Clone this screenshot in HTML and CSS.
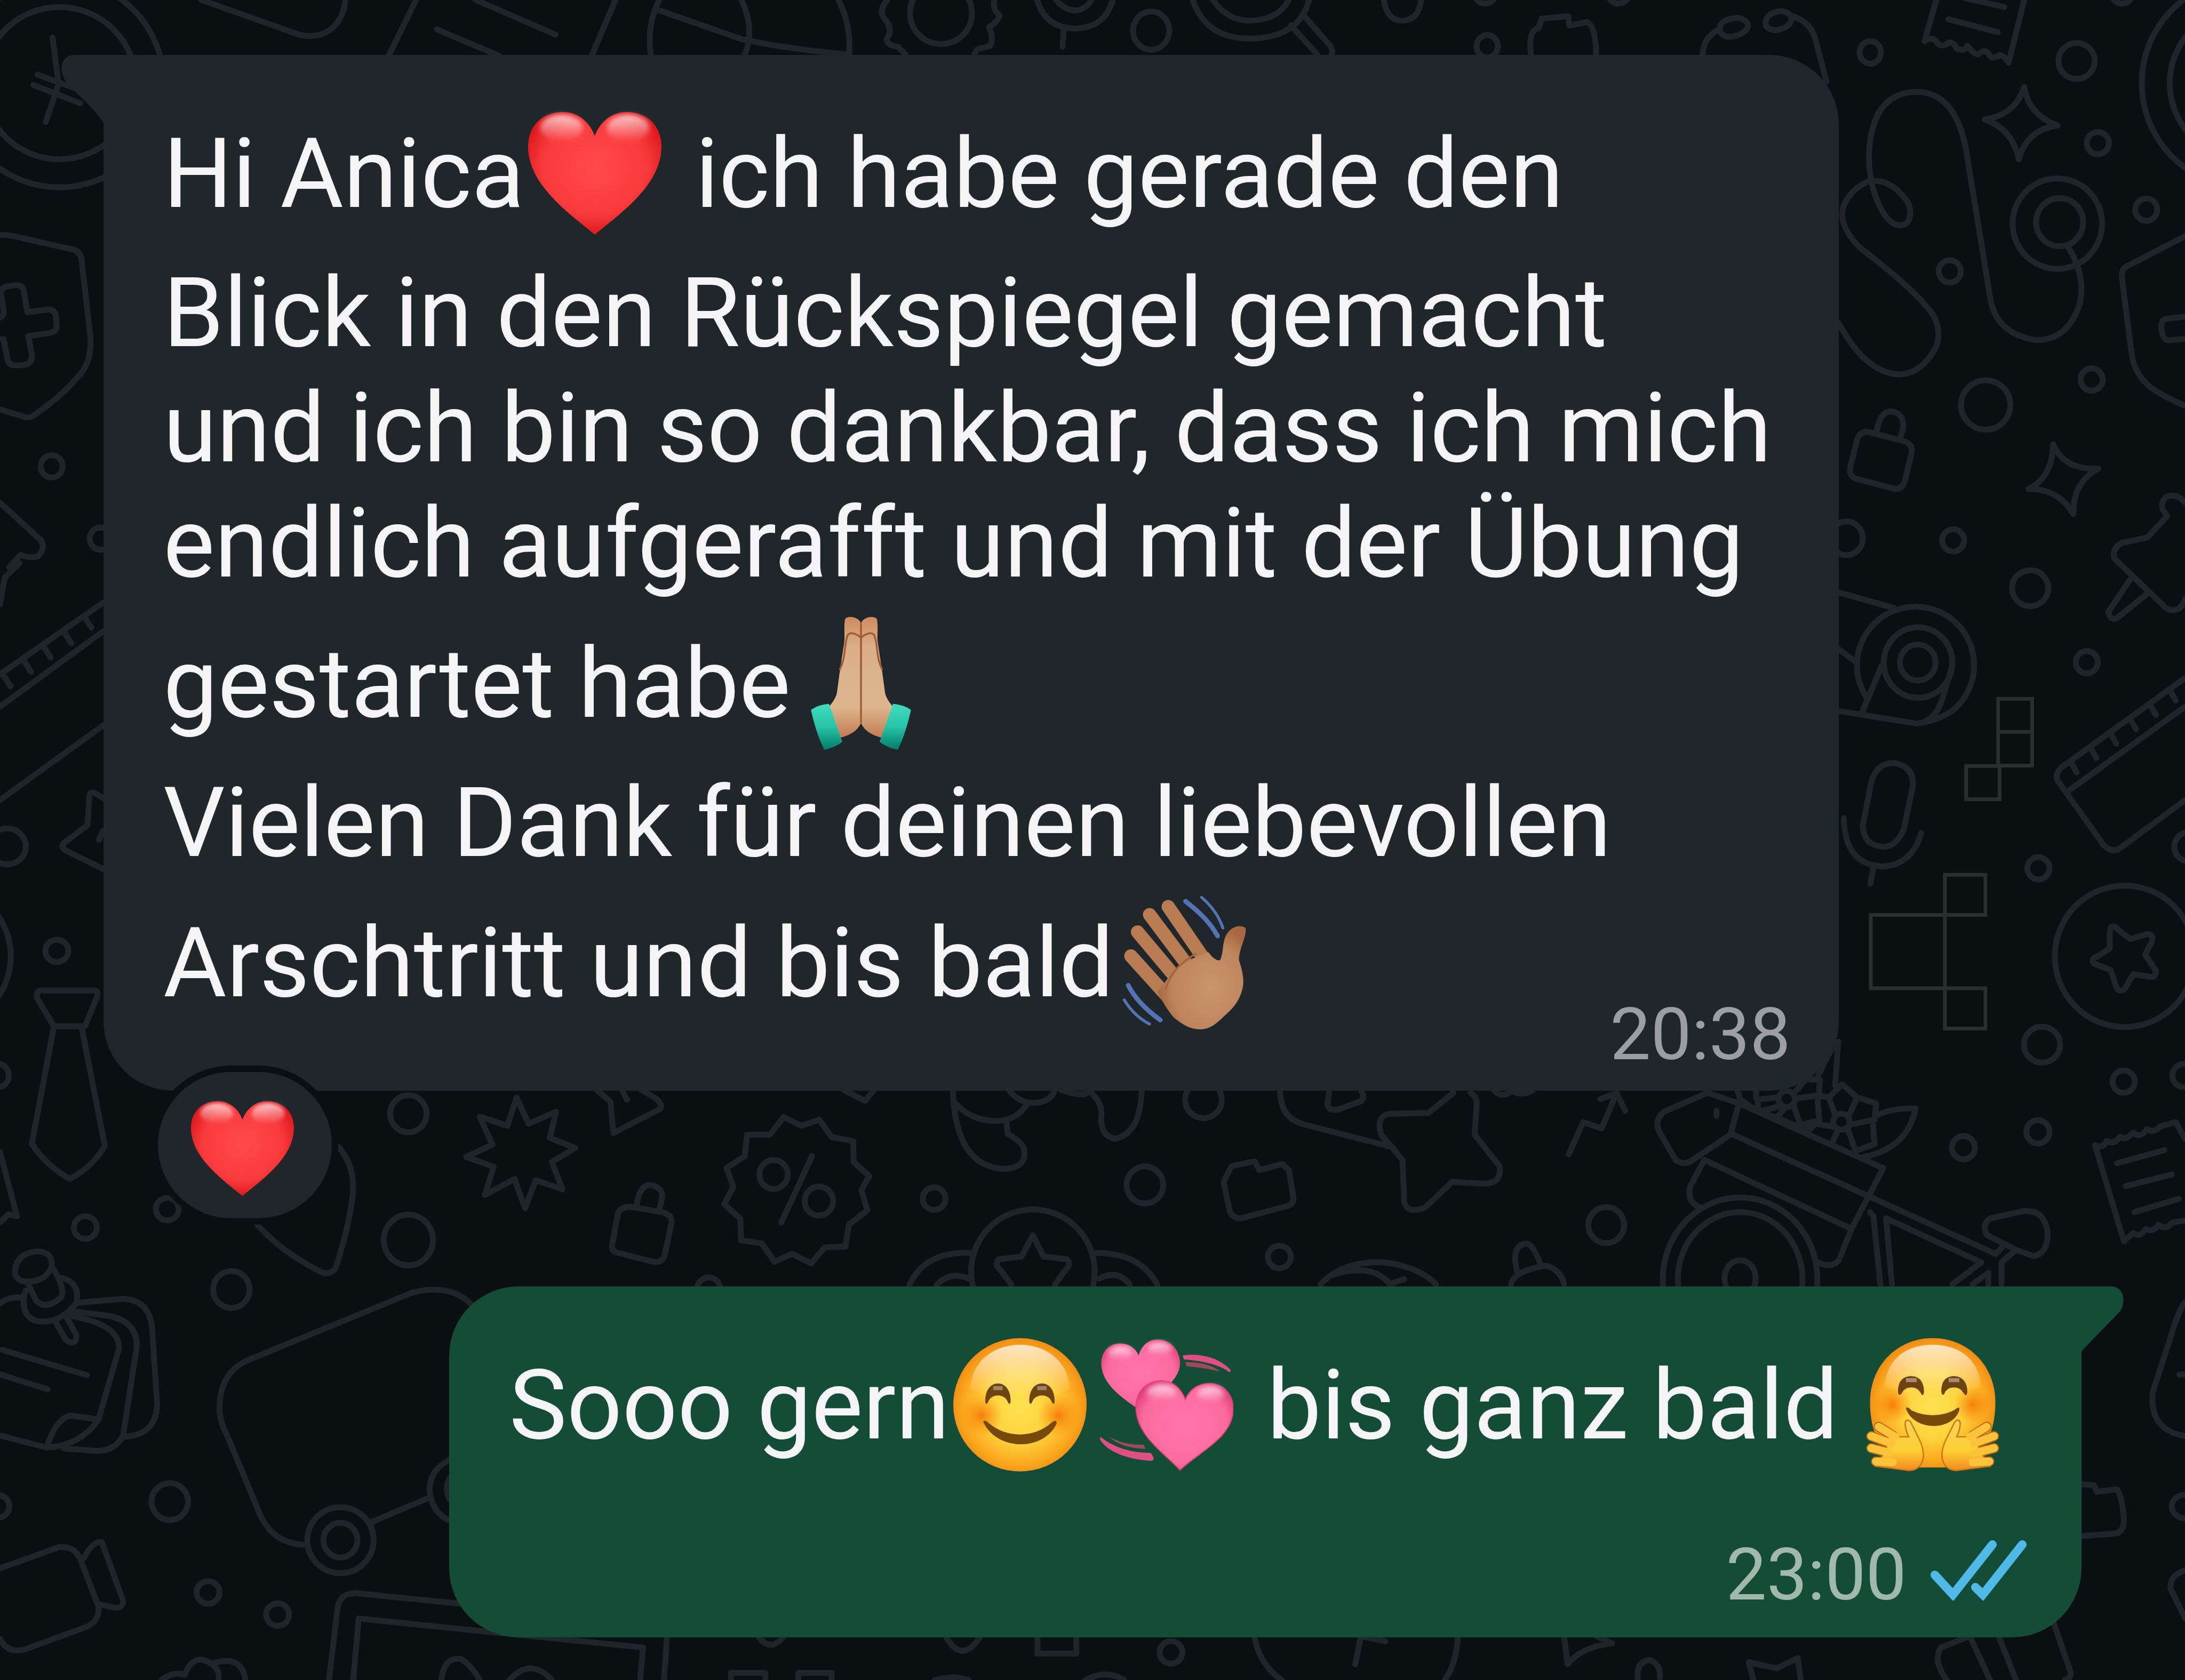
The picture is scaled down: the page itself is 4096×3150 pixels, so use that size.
FILE: index.html
```html
<!DOCTYPE html>
<html lang="de">
<head>
    <meta charset="UTF-8">
    <meta name="viewport" content="width=device-width, initial-scale=1.0">
    <title>Chat</title>
    <link rel="stylesheet" href="styles.css">
</head>
<body>
    <!-- emoji symbols -->
    <svg class="sprite" aria-hidden="true">
        <defs>
            <radialGradient id="red" cx="50%" cy="45%" r="60%">
                <stop offset="0" stop-color="#ff4a4c"/>
                <stop offset="0.65" stop-color="#f93a3d"/>
                <stop offset="1" stop-color="#d60f14"/>
            </radialGradient>
            <linearGradient id="gloss" x1="0" y1="0" x2="0" y2="1">
                <stop offset="0" stop-color="#fff" stop-opacity="0.75"/>
                <stop offset="1" stop-color="#fff" stop-opacity="0"/>
            </linearGradient>
            <radialGradient id="pink" cx="50%" cy="50%" r="58%">
                <stop offset="0" stop-color="#ff76ab"/>
                <stop offset="0.75" stop-color="#fc6a9f"/>
                <stop offset="1" stop-color="#e0407a"/>
            </radialGradient>
            <radialGradient id="face" cx="50%" cy="52%" r="52%">
                <stop offset="0" stop-color="#fde153"/>
                <stop offset="0.5" stop-color="#fdd23a"/>
                <stop offset="0.8" stop-color="#fcab1f"/>
                <stop offset="1" stop-color="#f08c14"/>
            </radialGradient>
            <radialGradient id="cheek">
                <stop offset="0" stop-color="#f57c05" stop-opacity="0.95"/>
                <stop offset="1" stop-color="#fa8a10" stop-opacity="0"/>
            </radialGradient>
            <linearGradient id="palm" x1="0" y1="0" x2="0" y2="1">
                <stop offset="0" stop-color="#f9d25a"/>
                <stop offset="0.6" stop-color="#fdd035"/>
                <stop offset="1" stop-color="#f48a22"/>
            </linearGradient>
            <linearGradient id="skin" x1="0" y1="0" x2="0" y2="1">
                <stop offset="0" stop-color="#cf8a60"/>
                <stop offset="0.25" stop-color="#d9b088"/>
                <stop offset="0.75" stop-color="#dcb68c"/>
                <stop offset="1" stop-color="#c37a52"/>
            </linearGradient>
            <linearGradient id="cuff" x1="0" y1="0" x2="0" y2="1">
                <stop offset="0" stop-color="#3fdcc0"/>
                <stop offset="0.5" stop-color="#27c4a9"/>
                <stop offset="1" stop-color="#047a68"/>
            </linearGradient>
            <radialGradient id="brown" cx="60%" cy="60%" r="60%">
                <stop offset="0" stop-color="#c8956d"/>
                <stop offset="0.7" stop-color="#bf865e"/>
                <stop offset="1" stop-color="#a9683f"/>
            </radialGradient>
            <filter id="soft" x="-30%" y="-30%" width="160%" height="160%">
                <feGaussianBlur stdDeviation="1.6"/>
            </filter>
        </defs>

        <symbol id="heart" viewBox="0 0 100 100">
            <path fill="url(#red)" d="M50 96C32 81 0 59 0 30C0 14 11 4 26 4C37 4 46 11 50 22C54 11 63 4 74 4C89 4 100 14 100 30C100 59 68 81 50 96Z"/>
            <ellipse fill="url(#gloss)" filter="url(#soft)" cx="25" cy="16" rx="16" ry="10"/>
            <ellipse fill="url(#gloss)" filter="url(#soft)" cx="75" cy="16" rx="16" ry="10"/>
        </symbol>

        <symbol id="smile" viewBox="0 0 100 100">
            <circle fill="url(#face)" cx="50" cy="50" r="50"/>
            <path fill="url(#gloss)" d="M50 5C28 5 13 20 13 38C25 46 75 46 87 38C87 20 72 5 50 5Z"/>
            <circle fill="url(#cheek)" cx="21" cy="58" r="16"/>
            <circle fill="url(#cheek)" cx="79" cy="58" r="16"/>
            <path fill="#6d4312" d="M24 47C24 39 28 34 33.500 34C39 34 43 39 43 47C43 50 41.500 50 40.500 47C39 44 36 43 33.500 43C31 43 28 44 26.500 47C25.500 50 24 50 24 47Z"/>
            <path fill="#6d4312" d="M57 47C57 39 61 34 66.500 34C72 34 76 39 76 47C76 50 74.500 50 73.500 47C72 44 69 43 66.500 43C64 43 61 44 59.500 47C58.500 50 57 50 57 47Z"/>
            <path fill="#fff" opacity="0.35" d="M30 36H37V39H30ZM63 36H70V39H63Z"/>
            <path fill="#774a0b" d="M22.500 63C23 61 25 62 27 64C40 75 60 75 73 64C75 62 78 61 77.500 64C68 85 33 85 22.500 63Z"/>
        </symbol>

        <symbol id="hearts" viewBox="0 0 100 100">
            <path fill="url(#pink)" d="M27 52C14 43 1 33 1 19C1 10 7 4 15 4C22 4 27 8 29 13C31 6 36 1 43 1C53 1 60 9 60 19C60 33 41 44 27 52Z"/>
            <ellipse fill="url(#gloss)" filter="url(#soft)" cx="15" cy="11" rx="9" ry="5"/>
            <ellipse fill="url(#gloss)" filter="url(#soft)" cx="45" cy="8" rx="9" ry="5"/>
            <path fill="url(#pink)" stroke="#dd4078" stroke-width="0.800" d="M60 99C48 86 27 73 27 52C27 40 35 32 46 32C55 32 61 38 64 46C67 39 73 34 82 34C93 34 100 43 100 53C100 75 73 86 60 99Z"/>
            <ellipse fill="url(#gloss)" filter="url(#soft)" cx="46" cy="41" rx="11" ry="6"/>
            <ellipse fill="url(#gloss)" filter="url(#soft)" cx="83" cy="42" rx="10" ry="6"/>
            <path fill="#e04f83" d="M62 13C76 11 90 15 98 24C98 26 97 26 95 24C86 19 76 17 63 16Z"/>
            <path fill="#a0485c" d="M64 18C75 18 84 20 90 25C82 23 74 22 65 21Z"/>
            <path fill="#e04f83" d="M0 76C-1 74 1 74 3 76C13 83 25 86 38 86C41 90 41 92 38 92C22 91 6 86 0 76Z"/>
            <path fill="#a0485c" d="M7 74C16 79 24 80 33 80L34 83C24 83 13 80 7 74Z"/>
        </symbol>

        <symbol id="hug" viewBox="0 0 100 100">
            <path fill="url(#face)" d="M50 0C77 0 97 21 97 48C97 76 84 97 58 97H42C16 97 3 76 3 48C3 21 23 0 50 0Z"/>
            <path fill="url(#gloss)" d="M50 5C28 5 15 18 14 36C25 44 75 44 86 36C85 18 72 5 50 5Z"/>
            <circle fill="url(#cheek)" cx="20" cy="50" r="14"/>
            <circle fill="url(#cheek)" cx="80" cy="50" r="14"/>
            <path fill="#6d4312" d="M24 40C24 32 28 28.500 34 28.500C40 28.500 43.500 33 43.500 40C43 44 42 43 41 41C39 38 37 37 34 37C30 37 28 39 27 41C25 44 24 42 24 40Z"/>
            <path fill="#6d4312" d="M56.500 40C56.500 32 60 28.500 66 28.500C72 28.500 76 33 76 40C75.500 44 74.500 43 73 41C71 38 69 37 66 37C62 37 60 39 59 41C58 44 56.500 42 56.500 40Z"/>
            <path fill="#fff" opacity="0.4" d="M30 30H38V33H30ZM62 30H70V33H62Z"/>
            <path fill="#774a0b" d="M30 53C30 51 32 52 34 54C43 59 57 59 66 54C69 52 70.500 51 70 54C65 70 36 70 30 53Z"/>
            <g id="hug-hand">
                <path fill="none" stroke="#b9640f" stroke-width="7.500" stroke-linecap="round" d="M9.500 66.500L20 73M4 73.500L17 79M4 82.500L16 86M7.500 92.500L18 93"/>
                <path fill="url(#palm)" stroke="#cf7614" stroke-width="1" d="M17 74L32 74C30 70 29 65 29.500 63C30 61 32 61 33.500 63L40 76C43 82 44 89 42 93C40 98 35 100 30 99L7 96L15 84Z"/>
                <path fill="none" stroke="#fbc43a" stroke-width="6" stroke-linecap="round" d="M9.500 66.500L22 74M4 73.500L19 79M4 82.500L18 86M7.500 92.500L20 93"/>
            </g>
            <use href="#hug-hand" transform="matrix(-1 0 0 1 100 0)"/>
        </symbol>

        <symbol id="pray" viewBox="0 0 100 100">
            <path fill="url(#skin)" d="M50 5C48 0 40 -1 38 2C37 8 38 14 37.500 19L34 42L32 57C31 62 28 65 25 69L34 91C42 89 47 86 50 80C53 86 58 89 66 91L75 69C72 65 69 62 68 57L66 42L62.500 19C62 14 63 8 62 2C60 -1 52 0 50 5Z"/>
            <path fill="none" stroke="#a25a38" stroke-width="1.400" d="M50 5V80M50 16C47 13 42 11 40 14C37 22 39 30 34 40M50 16C53 13 58 11 60 14C63 22 61 30 66 40"/>
            <path fill="url(#cuff)" d="M12.500 70C17 67 21 66 26 65.500L36 94C32 97 27 99 22.500 100C18 91 15 81 12.500 70Z"/>
            <path fill="url(#cuff)" d="M87.500 70C83 67 79 66 74 65.500L64 94C68 97 73 99 77.500 100C82 91 85 81 87.500 70Z"/>
        </symbol>

        <symbol id="wave" viewBox="0 0 100 100">
            <g fill="none" stroke="#b97c52" stroke-width="10" stroke-linecap="round">
                <path d="M38 8L64 46M24 14L54 54M15 27L46 64M10 45L38 76"/>
            </g>
            <path fill="url(#brown)" d="M68 42C71 46 74 49 77 48C80 41 78 33 83 27C86 23 92 21 96 24C97 31 91 39 91 48C93 54 95 61 94 68C92 78 87 84 80 90C74 96 69 100 62 100C54 100 48 96 42 91C37 85 33 78 30 72L42 56L56 47Z"/>
            <path fill="none" stroke="#a3653f" stroke-width="1.400" d="M59 43C48 50 40 56 36 70"/>
            <g fill="none" stroke="#5473b5" stroke-linecap="round">
                <path stroke-width="3.500" d="M51 4C60 11 69 19 75 30M8 67C13 77 21 85 32 93"/>
                <path stroke-width="2.200" d="M63 1C70 7 76 15 79 24M5 78C10 86 16 92 24 96"/>
            </g>
        </symbol>
    </svg>

    <!-- doodle wallpaper -->
    <svg class="wallpaper" viewBox="0 0 4267 3282" preserveAspectRatio="xMidYMid slice" aria-hidden="true">
        <g transform="scale(0.893 0.7015)">
            <ellipse cx="130" cy="232" rx="167" ry="212"/>
            <ellipse cx="130" cy="232" rx="228" ry="290"/>
            <path d="M115 105L128 235L100 340M82 208L172 250M73 237L175 288"/>
            <path d="M440 0L650 95Q690 110 720 85Q752 55 755 0"/>
            <path d="M910 0L850 155M955 82L1090 155M1040 0L1215 97"/>
            <path d="M0 655Q15 653 30 658L160 695Q175 702 178 720L197 930Q203 1010 170 1050Q135 1105 70 1160Q60 1166 45 1158L0 1140"/>
            <path d="M0 885Q10 880 8 865L2 820Q0 800 20 797L35 794Q50 795 52 810L60 870L105 862Q120 862 122 880L124 910Q122 925 108 928L62 936L70 990Q70 1012 55 1016L35 1018Q20 1017 17 1005L8 945L0 945"/>
            <ellipse cx="113" cy="1299" rx="24" ry="31"/>
            <ellipse cx="220" cy="1500" rx="24" ry="31"/>
            <path d="M0 1400L90 1505Q100 1530 82 1550Q60 1555 45 1545L20 1580"/>
        </g>
        <g transform="translate(1000 0) scale(2.0835 0.3333)">
            <path d="M97 0L75 322M138 0Q126 150 130 322M135 55L215 230Q260 290 315 320M215 0Q228 170 218 322M306 0Q318 150 316 322"/>
            <path d="M352 0Q343 60 349 110Q358 170 351 230Q352 270 362 275L369 322M452 0Q450 60 457 90Q455 130 447 160Q452 220 448 270L436 290L433 322"/>
            <ellipse cx="402" cy="78" rx="29" ry="181"/>
            <path d="M492 0Q500 165 527 168Q556 165 563 0M510 0Q518 60 527 62Q538 60 543 0M517 170L516 275"/>
            <ellipse cx="599" cy="180" rx="17" ry="112"/>
            <path d="M638 0Q650 225 691 227Q738 225 747 0M657 0Q670 120 691 122Q718 120 728 0M730 150L755 322M741 85L767 270Q770 300 768 322"/>
            <path d="M817 0Q820 120 834 122Q850 120 852 0"/>
            <ellipse cx="912" cy="-44" rx="10" ry="66"/>
            <ellipse cx="1037" cy="-44" rx="10" ry="66"/>
            <ellipse cx="1509" cy="-44" rx="10" ry="66"/>
            <ellipse cx="914" cy="272" rx="10" ry="66"/>
            <path d="M955 322Q952 180 962 165L965 110L990 95L991 150L1008 130Q1016 160 1016 322"/>
            <path d="M1116 322Q1116 220 1132 170M1132 170Q1132 110 1150 105Q1162 130 1157 175Q1150 220 1138 215Q1132 200 1132 170"/>
            <path d="M1175 130Q1176 75 1190 65Q1200 75 1199 120Q1196 170 1184 178Q1174 170 1175 130M1200 95Q1218 130 1222 240L1232 480"/>
            <ellipse cx="1273" cy="308" rx="10" ry="66"/>
        </g>
        <g transform="translate(3400 0) scale(0.553 0.7015)">
            <path d="M690 0L648 115Q680 100 693 120Q710 135 735 118Q755 120 760 135Q790 145 800 128Q820 150 838 152Q860 135 875 150Q880 165 905 158Q920 145 945 175L1000 0M790 -5L930 20M733 54L907 90"/>
            <ellipse cx="1185" cy="170" rx="64" ry="50"/>
            <path d="M1000 242Q1015 320 1118 350Q1010 360 981 444Q960 360 860 333Q970 320 1000 242Z"/>
            <ellipse cx="1260" cy="399" rx="39" ry="31"/>
            <ellipse cx="1431" cy="584" rx="39" ry="31"/>
            <ellipse cx="737" cy="756" rx="39" ry="31"/>
            <ellipse cx="1238" cy="1057" rx="39" ry="31"/>
            <ellipse cx="749" cy="1505" rx="39" ry="31"/>
            <ellipse cx="1783" cy="232" rx="368" ry="290"/>
            <ellipse cx="1783" cy="232" rx="269" ry="212"/>
            <path d="M345 900Q440 1040 560 1043Q640 1040 690 965Q715 900 650 850Q600 800 420 690Q345 630 360 580Q380 530 450 505Q530 495 590 565Q610 605 580 625Q530 640 490 575Q450 510 452 430Q460 270 600 257Q750 245 793 410L880 830Q900 930 1040 947Q1150 950 1195 850Q1220 770 1155 688"/>
            <ellipse cx="1117" cy="623" rx="158" ry="126"/>
            <ellipse cx="1125" cy="619" rx="83" ry="67"/>
            <ellipse cx="864" cy="1128" rx="87" ry="69"/>
            <path d="M410 1225Q420 1200 450 1203L580 1230Q608 1240 602 1262L580 1335Q570 1365 540 1361L405 1333Q380 1325 386 1300ZM478 1205Q490 1145 530 1146Q575 1150 573 1190L562 1220"/>
            <ellipse cx="372" cy="1499" rx="58" ry="47"/>
            <path d="M1102 1237Q1140 1310 1262 1305Q1170 1345 1174 1432Q1120 1360 1015 1362Q1100 1330 1102 1237Z"/>
            <path d="M1568 658L1355 745Q1342 755 1346 780L1380 990Q1390 1040 1440 1075Q1490 1105 1568 1130M1568 882L1500 888Q1482 892 1484 915Q1490 948 1510 948L1568 944"/>
            <path d="M1568 1400Q1535 1370 1500 1385Q1480 1400 1490 1420L1505 1437L1435 1497L1345 1512Q1310 1525 1318 1555L1500 1693Q1550 1713 1568 1668M1375 1613L1298 1703Q1300 1728 1325 1723L1435 1653"/>
        </g>
        <g transform="translate(3400 1100) scale(0.553 0.7015)">
            <ellipse cx="1021" cy="70" rx="64" ry="50"/>
            <ellipse cx="1221" cy="276" rx="39" ry="31"/>
            <ellipse cx="1050" cy="850" rx="39" ry="31"/>
            <ellipse cx="1351" cy="1444" rx="39" ry="31"/>
            <ellipse cx="1063" cy="1341" rx="64" ry="50"/>
            <ellipse cx="1568" cy="1427" rx="45" ry="33"/>
            <ellipse cx="1580" cy="790" rx="50" ry="40"/>
            <path d="M345 82L540 125M345 240L410 278M345 412L620 447Q690 440 745 412A207 163 0 1 0 440 370M497 285L428 415M745 290L710 380Q690 430 640 445"/>
            <ellipse cx="625" cy="277" rx="121" ry="98"/>
            <ellipse cx="624" cy="277" rx="63" ry="50"/>
            <path class="thin" d="M908 378H1028V564H908ZM915 470H1028M795 565H913V658H795Z"/>
            <path class="thin" d="M720 868H863V980H720ZM458 980H720V1184H458ZM720 1184H863V1296H720Z"/>
            <path d="M460 610Q480 555 540 557Q610 565 607 620L575 740Q550 790 500 790Q430 785 430 730ZM363 710Q365 840 500 845Q605 840 636 752M467 848L457 893"/>
            <path d="M1568 320L1130 570Q1105 590 1120 608L1280 785Q1310 810 1340 793L1568 660M1150 638L1568 400M1165 555L1185 583M1235 515L1255 543M1305 475L1325 503M1375 435L1395 463M1445 395L1465 423M1515 355L1535 383"/>
            <ellipse cx="1355" cy="1095" rx="247" ry="197"/>
            <path d="M1305 1015Q1320 1008 1330 1020L1375 1047L1435 1033Q1460 1035 1450 1055L1427 1090L1465 1135Q1465 1155 1445 1152L1385 1145L1355 1185Q1335 1198 1325 1180L1305 1133L1245 1115Q1235 1100 1255 1097L1302 1073L1302 1030Z"/>
        </g>
        <g transform="translate(0 1100) scale(0.638 0.7015)">
            <path d="M60 0L15 40Q10 60 0 115"/>
            <path d="M0 310L316 110M0 400L316 190M0 660L316 452M12 315L32 343M75 275L95 303M135 235L155 263M198 195L218 223M260 152L280 180"/>
            <path d="M316 655L290 640Q275 635 273 650L268 730L195 780Q185 790 200 800L316 852M303 770L316 745"/>
            <ellipse cx="22" cy="789" rx="57" ry="50"/>
            <ellipse cx="174" cy="1080" rx="35" ry="31"/>
            <ellipse cx="-184" cy="1095" rx="217" ry="197"/>
            <ellipse cx="-8" cy="1427" rx="35" ry="33"/>
            <path d="M125 1190H290Q303 1192 296 1210L260 1290H165L113 1210Q110 1192 125 1190Z"/>
        </g>
        <g transform="translate(0 2050) scale(0.829 0.7857)">
            <path d="M127 -57L75 235Q110 290 165 322Q220 290 247 240L192 -57"/>
            <path d="M0 255L40 415L20 410L0 430"/>
            <ellipse cx="201" cy="443" rx="27" ry="28"/>
            <ellipse cx="394" cy="397" rx="27" ry="28"/>
            <ellipse cx="490" cy="1350" rx="27" ry="28"/>
            <ellipse cx="654" cy="1405" rx="27" ry="28"/>
            <ellipse cx="-5" cy="1136" rx="27" ry="28"/>
            <ellipse cx="962" cy="160" rx="43" ry="46"/>
            <ellipse cx="545" cy="597" rx="43" ry="46"/>
            <ellipse cx="400" cy="1124" rx="43" ry="46"/>
            <ellipse cx="962" cy="474" rx="58" ry="63"/>
            <path d="M795 240Q840 290 830 370Q820 450 790 545Q775 565 750 550Q660 500 605 435"/>
            <path d="M1217 120L1245 185L1310 155L1295 220L1355 245L1300 280L1325 348L1262 325L1237 395L1212 322L1142 362L1163 292L1098 267L1160 237L1130 167L1195 190Z"/>
            <path d="M1405 100L1438 130L1445 208L1555 148Q1562 138 1545 122L1510 100M1465 100L1477 125"/>
            <path d="M35 550Q40 505 90 502Q125 505 122 540Q105 580 60 577Q35 575 35 550ZM65 580L85 625Q110 650 145 615Q152 590 125 545M60 600Q45 660 85 675Q140 685 180 630Q190 580 145 568M132 680L155 722Q180 740 180 710L158 668"/>
            <path d="M0 632Q20 612 55 618M180 630L290 620Q350 622 358 690L370 880Q370 960 290 963M165 650L260 663Q325 680 322 740L290 960Q270 1000 225 998L150 992M150 660Q285 680 280 745L232 920Q190 985 110 990L0 960M232 920Q200 915 165 910Q130 920 110 990M5 747L205 810M0 808L112 845"/>
            <path d="M1112 635Q1060 580 970 605L590 770Q515 800 517 900Q520 930 535 960L610 1150Q640 1230 722 1232M875 1175L1010 1115M1060 1020Q1012 1045 1012 1095Q1015 1150 1060 1172M1060 1065Q1045 1090 1060 1120"/>
            <ellipse cx="802" cy="1220" rx="78" ry="82"/>
            <ellipse cx="802" cy="1220" rx="40" ry="43"/>
            <path d="M0 1290L140 1237Q180 1235 192 1275L232 1385Q235 1420 205 1435L55 1493Q15 1500 0 1465M197 1265Q220 1220 240 1225L290 1370Q290 1390 270 1388L235 1380"/>
            <path d="M775 1568L795 1390Q800 1350 840 1352L1085 1378M832 1568L845 1415L1515 1487L1508 1568M1040 1568Q1045 1510 1085 1515Q1110 1530 1130 1568M1200 1568Q1250 1510 1300 1568"/>
            <path d="M380 1568Q410 1545 435 1555Q450 1515 475 1517Q520 1530 515 1568M505 1525Q570 1505 578 1568"/>
        </g>
        <g transform="translate(1200 2050) scale(0.893 0.7857)">
            <path d="M-5 485L8 405Q18 388 40 392L105 405Q127 412 125 430L110 510Q105 532 85 528L5 505Q-8 500 -5 485ZM48 390Q55 335 80 337Q110 345 103 375L97 403"/>
            <path d="M370 168L408 190L448 175L475 218L522 228L523 280L557 315L540 350L553 400L513 435L505 490L460 492L430 532L388 508L350 528L322 482L277 475L275 420L240 385L260 342L245 295L285 265L290 212L340 212Z"/>
            <ellipse cx="348" cy="311" rx="31" ry="36"/>
            <ellipse cx="447" cy="377" rx="31" ry="36"/>
            <path d="M432 265L365 430"/>
            <ellipse cx="699" cy="371" rx="25" ry="28"/>
            <ellipse cx="1454" cy="516" rx="25" ry="28"/>
            <ellipse cx="1217" cy="1499" rx="25" ry="28"/>
            <ellipse cx="206" cy="595" rx="25" ry="28"/>
            <ellipse cx="1160" cy="337" rx="40" ry="46"/>
            <ellipse cx="1288" cy="125" rx="40" ry="46"/>
            <ellipse cx="915" cy="552" rx="135" ry="154"/>
            <path d="M915 462L938 515L990 522Q1000 535 985 550L963 585M915 462L890 515L840 522Q830 535 845 550L868 585M645 585Q680 500 780 506M1052 506Q1150 505 1187 585M705 585Q735 550 775 570M1060 570Q1100 545 1127 585"/>
            <path d="M740 100Q745 290 850 297Q905 295 895 245Q890 230 860 210L857 180M742 130Q780 180 840 178Q880 175 903 135M862 100Q885 135 920 133Q955 130 963 100M975 100Q1000 112 1025 112L1040 105Q1065 130 1065 160Q1060 215 1095 222Q1150 210 1153 100M500 100L548 128L568 100"/>
            <path d="M1338 315L1350 290L1400 278L1410 300L1460 285L1475 300L1485 370Q1485 385 1470 390L1370 420Q1350 420 1345 400L1332 330Z"/>
            <path d="M115 1460L108 1568M315 1460Q340 1500 370 1460M725 1460Q760 1530 800 1460M925 1460V1502H1010V1460M255 1568V1550H330V1568M402 1568V1550H475V1568M700 1568Q740 1555 775 1568M1030 1568Q1075 1540 1115 1568M1400 1460Q1410 1530 1460 1568"/>
        </g>
        <g transform="translate(2500 2000) scale(1.127 0.8176)">
            <path d="M0 160Q0 225 40 240L195 295M330 165Q343 175 340 200L337 265L380 340Q385 380 355 382L298 378L250 440Q220 455 215 425L212 325L175 265Q165 220 190 215L257 213L300 165"/>
            <path d="M85 160L82 195Q85 208 100 205L140 185Q148 175 140 160M370 158Q385 180 402 160Q420 175 438 158"/>
            <path d="M500 312L525 235L557 250L583 165M555 180L583 165L598 208"/>
            <ellipse cx="565" cy="481" rx="31" ry="43"/>
            <ellipse cx="1184" cy="296" rx="20" ry="28"/>
            <ellipse cx="1313" cy="258" rx="20" ry="28"/>
            <ellipse cx="1568" cy="1153" rx="23" ry="28"/>
            <path d="M795 190L740 165L665 210Q645 235 660 265L685 325Q700 340 715 325L780 265L795 190M756 208V220M795 190L1045 345L990 490L735 325M785 265L1240 550L1252 532M735 325L710 390Q705 425 725 437"/>
            <path d="M990 490L968 565Q955 585 932 570M1022 450L1028 460L1040 622M1060 622L1050 465L1215 570L1165 622M1250 622V570L1275 540M1200 622L1227 595V622"/>
            <ellipse cx="797" cy="610" rx="134" ry="195"/>
            <ellipse cx="797" cy="610" rx="108" ry="160"/>
            <ellipse cx="797" cy="608" rx="27" ry="43"/>
            <path d="M1275 540L1305 555Q1330 550 1330 500Q1325 445 1290 447L1230 465Q1215 480 1225 505Z"/>
            <path d="M410 590Q400 525 428 525Q440 530 452 578M400 622Q405 590 460 578Q485 585 492 622"/>
            <path d="M70 622Q110 565 180 570Q240 580 270 622M90 600Q160 570 190 622M190 622L215 610"/>
            <path d="M1412 290Q1425 300 1432 280Q1445 290 1455 270Q1465 280 1478 260Q1490 275 1502 252Q1515 262 1525 245L1552 235L1568 275M1412 290L1462 520L1478 500Q1490 512 1500 490Q1512 500 1522 480Q1535 495 1545 475L1568 470M1450 333L1532 302M1465 388L1545 360M1480 450L1557 418"/>
            <path d="M1568 665Q1555 690 1545 740L1512 880Q1505 970 1568 985M1558 838H1568"/>
            <path d="M1389 1100L1410 1102L1415 1118L1450 1112Q1460 1130 1462 1190Q1460 1218 1445 1218L1389 1224M1568 1305Q1540 1320 1543 1350L1568 1420"/>
            <path d="M130 1530L140 1463L182 1475M308 1463Q305 1530 285 1568M492 1463L498 1530Q520 1490 575 1480L548 1463M620 1568Q615 1525 640 1520Q660 1530 658 1562M820 1568L812 1525L860 1540L897 1515L902 1568M1195 1463L1145 1490Q1130 1520 1155 1568M1195 1463L1230 1568M1245 1463L1275 1568M1340 1430L1370 1550Q1370 1565 1360 1568"/>
        </g>
        <!-- fruit basket -->
        <g transform="translate(3300 1950) scale(0.6167 0.3954)">
            <ellipse cx="307" cy="498" rx="26" ry="40"/>
            <ellipse cx="480" cy="610" rx="26" ry="40"/>
            <path d="M335 460L370 397L412 405L408 480L335 495M330 535L350 625L410 605L405 510L408 480L440 490L460 575M285 535L215 560V500L280 490M150 455L160 500L215 560L275 590L300 545M210 455V495M275 590L350 640"/>
            <path d="M440 490L482 425L530 490L505 575M530 490L590 520L585 600L508 625M500 645L525 755L585 720L580 625M455 635L395 620L355 640M470 650L450 715M395 620L375 660"/>
            <path d="M405 390Q440 260 470 215L460 430M590 580Q640 540 715 545Q690 740 550 785"/>
        </g>
    </svg>

    <main class="chat">
        <article class="bubble incoming">
            <svg class="tail" viewBox="0 0 80 128" aria-hidden="true"><path d="M80 0H24C2 0 -6 24 6 46C24 72 48 84 80 128Z"/></svg>
            <p class="text">Hi Anica<svg class="emoji" role="img" aria-label="Rotes Herz"><use href="#heart"/></svg> ich habe gerade den<br>
                Blick in den Rückspiegel gemacht<br>
                und ich bin so dankbar, dass ich mich<br>
                endlich aufgerafft und mit der Übung<br>
                gestartet habe<svg class="emoji" role="img" aria-label="Gefaltete Hände"><use href="#pray"/></svg><br>
                Vielen Dank für deinen liebevollen<br>
                Arschtritt und bis bald<svg class="emoji" role="img" aria-label="Winkende Hand"><use href="#wave"/></svg></p>
            <footer class="meta"><time datetime="20:38">20:38</time></footer>
        </article>
        <button class="reaction" type="button" aria-label="Reaktion: Herz"><svg class="reaction-icon" aria-hidden="true"><use href="#heart"/></svg></button>

        <article class="bubble outgoing">
            <svg class="tail" viewBox="0 0 80 128" aria-hidden="true"><path d="M0 0H56C78 0 86 24 74 46L6 116Q0 122 0 128Z"/></svg>
            <p class="text">Sooo gern<svg class="emoji" role="img" aria-label="Lächeln"><use href="#smile"/></svg><svg class="emoji" role="img" aria-label="Kreisende Herzen"><use href="#hearts"/></svg> bis ganz bald <svg class="emoji" role="img" aria-label="Umarmung"><use href="#hug"/></svg></p>
            <footer class="meta">
                <time datetime="23:00">23:00</time>
                <svg class="checks" viewBox="0 0 180 113" role="img" aria-label="Gelesen"><path d="M8 65L42 102L116 8M84 88L98 102L172 8"/></svg>
            </footer>
        </article>
    </main>
</body>
</html>
```

FILE: styles.css
```css
* {
    box-sizing: border-box;
}
body {
    margin: 0;
    background: #0a0f12;
    color: #f5f5f8;
    font-family: Roboto, "Liberation Sans", sans-serif;
    font-size: 182px;
    line-height: 216px;
}
.sprite {
    position: absolute;
    width: 0;
    height: 0;
}
.wallpaper {
    position: fixed;
    top: 0;
    left: 0;
    width: 100%;
    height: 100%;
    fill: none;
    stroke: #212529;
    stroke-width: 11px;
    stroke-linecap: round;
    stroke-linejoin: round;
}
.wallpaper path, .wallpaper ellipse { vector-effect: non-scaling-stroke; }
.wallpaper .thin {
    stroke: #2a2e31;
    stroke-width: 7px;
    stroke-linejoin: miter;
}
.chat {
    position: relative;
    display: flex;
    flex-direction: column;
    align-items: flex-start;
    min-height: 100vh;
    padding: 103px 194px 80px;
}
.bubble {
    position: relative;
    max-width: 100%;
    padding: 68px 90px 25px 112px;
    border-radius: 130px;
}
.incoming {
    background: #1f272a;
    fill: #1f272a;
    border-top-left-radius: 0;
}
.outgoing {
    align-self: flex-end;
    margin-top: 116px;
    padding-bottom: 37px;
    background: #144d37;
    fill: #144d37;
    border-top-right-radius: 0;
}
/* little corner that points to the sender */
.tail {
    position: absolute;
    top: 0;
    width: 80px;
    height: 128px;
}
.incoming .tail { right: 100%; margin-right: -1px; }
.outgoing .tail { left: 100%; margin-left: -1px; }
.text {
    margin: 0;
    padding-right: 36px;
}
.outgoing .text { padding-right: 46px; }
.emoji {
    width: 250px;
    height: 250px;
    margin: 29px 18px 29px 7px;
    vertical-align: -91px;
}
.meta {
    display: flex;
    justify-content: flex-end;
    align-items: center;
    gap: 45px;
    font-size: 136px;
    line-height: 160px;
}
.incoming .meta {
    margin-top: -99px;
    color: #9b9fa2;
}
.outgoing .meta {
    margin-top: 85px;
    padding-right: 13px;
    color: #a1b8ad;
}
.checks {
    width: 180px;
    height: 113px;
    margin-bottom: 18px;
    fill: none;
    stroke: #4fb9e8;
    stroke-width: 16px;
    stroke-linecap: round;
}
.reaction {
    position: relative;
    display: flex;
    align-items: center;
    justify-content: center;
    width: 350px;
    height: 298px;
    margin: -47px 0 0 90px;
    padding: 12px 10px 0 0;
    border: 12px solid #0a0f12;
    border-radius: 149px;
    background: #1f272a;
    cursor: pointer;
}
.reaction-icon {
    width: 193px;
    height: 193px;
}
```
